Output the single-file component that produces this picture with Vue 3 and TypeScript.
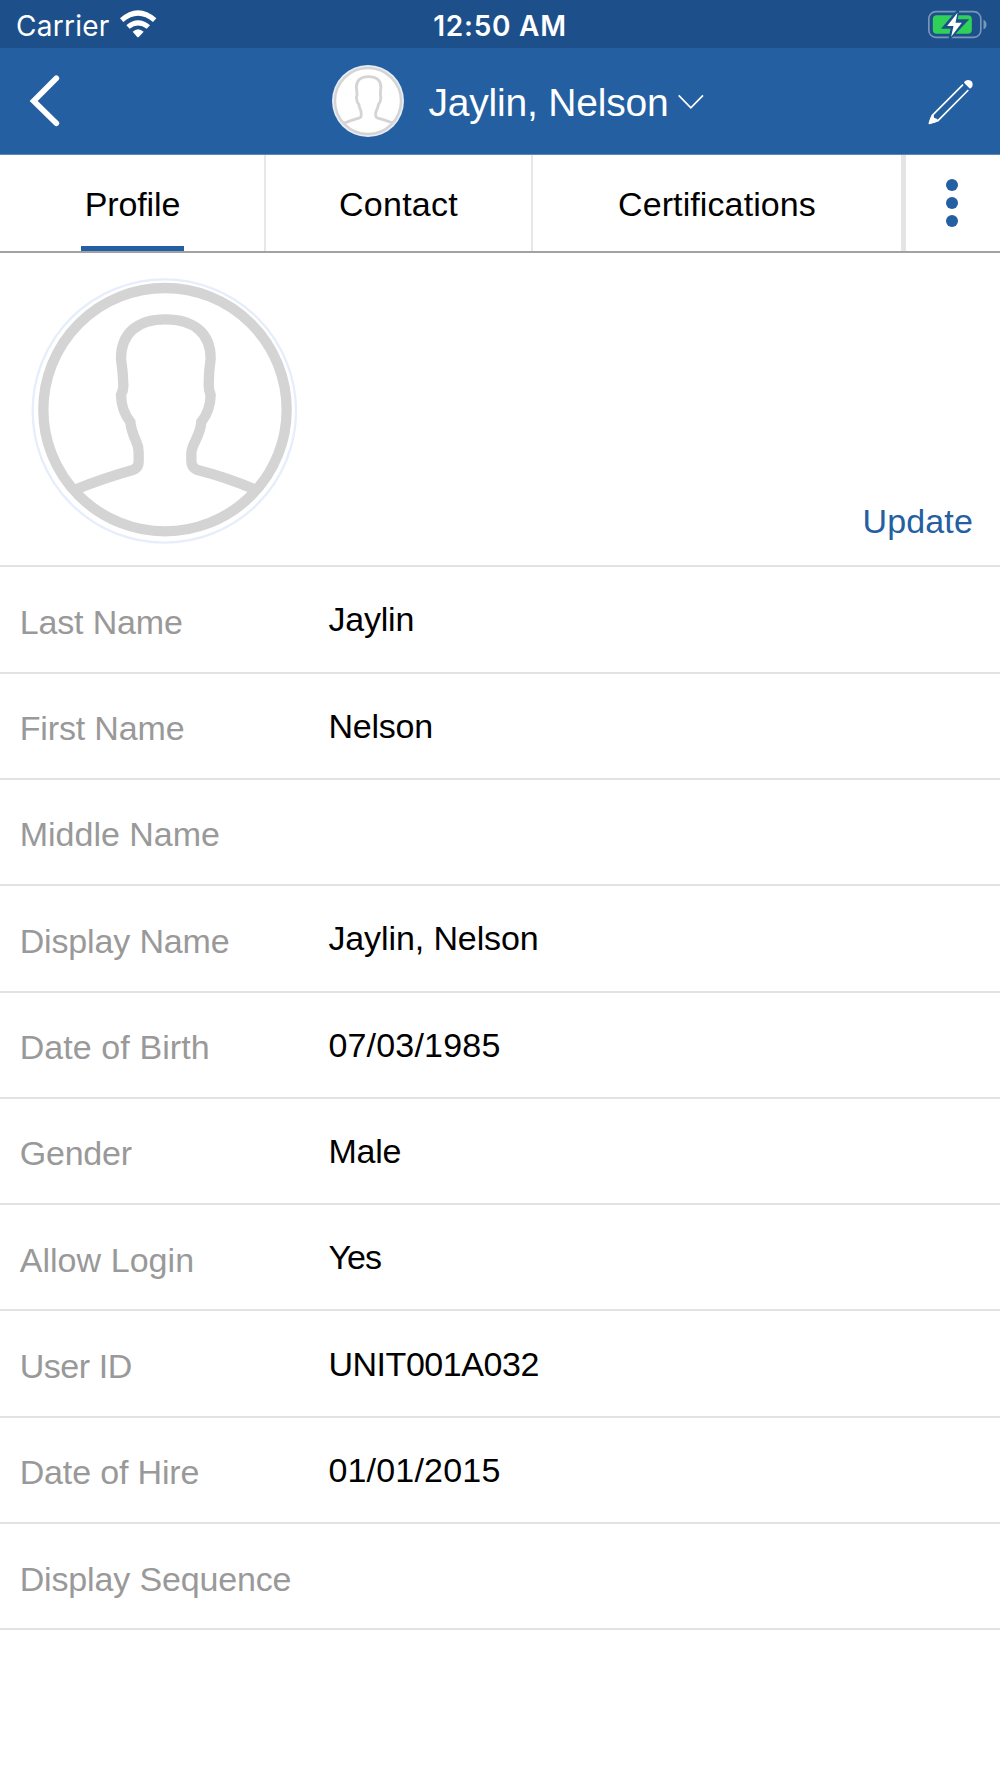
<script setup lang="ts">
interface Field {
  label: string
  value: string
  labelTrack?: number
  valueTrack?: number
}

const fields: Field[] = [
  { label: 'Last Name', value: 'Jaylin', labelTrack: -0.15, valueTrack: -0.2 },
  { label: 'First Name', value: 'Nelson', labelTrack: -0.15, valueTrack: -0.2 },
  { label: 'Middle Name', value: '' },
  { label: 'Display Name', value: 'Jaylin, Nelson', labelTrack: -0.15, valueTrack: -0.1 },
  { label: 'Date of Birth', value: '07/03/1985', labelTrack: 0.08, valueTrack: 0.2 },
  { label: 'Gender', value: 'Male', labelTrack: -0.2, valueTrack: -0.2 },
  { label: 'Allow Login', value: 'Yes', labelTrack: 0.05, valueTrack: -0.9 },
  { label: 'User ID', value: 'UNIT001A032', labelTrack: -0.45, valueTrack: -0.45 },
  { label: 'Date of Hire', value: '01/01/2015', labelTrack: -0.15, valueTrack: 0.2 },
  { label: 'Display Sequence', value: '', labelTrack: -0.15 },
]

const tabs: { name: string; active: boolean }[] = [
  { name: 'Profile', active: true },
  { name: 'Contact', active: false },
  { name: 'Certifications', active: false },
]

const figurePath =
  'M230 687 Q310 655 398 630 Q416 624 416 606 V578 Q416 560 408 543 Q393 510 391 486 ' +
  'Q364 452 363 405 Q371 390 370 374 Q369 335 363 296 C363 220 412 178 496 178 ' +
  'C582 178 632 220 632 296 Q626 335 626 376 Q626 390 632 405 Q631 452 604 486 ' +
  'Q602 510 587 541 Q574 566 574 582 V602 Q574 622 590 629 Q680 652 762 687'
</script>

<template>
  <div class="screen">
    <div class="status">
      <div class="carrier">
        <span class="carrier-name">Carrier</span>
        <svg class="wifi" viewBox="358 26 114 87">
          <path d="M361 54 Q415 6 470 54 L460 65 Q415 28 371 65 Z" fill="#fff" />
          <path d="M380 75 Q415 45 451 75 L441 85 Q415 66 390 85 Z" fill="#fff" />
          <path d="M399 94 Q415 79 432 94 L418 109 Q415 112 412 109 Z" fill="#fff" />
        </svg>
      </div>
      <span class="clock">12:50 AM</span>
      <svg class="battery" viewBox="682 26 182 96">
        <rect x="687" y="34" width="156" height="77" rx="21" fill="none" stroke="#7796ba" stroke-width="5" />
        <path d="M851 58 Q860 62 860 73 Q860 83 851 87 Z" fill="#7796ba" />
        <rect x="699" y="45" width="117" height="55" rx="12" fill="#30d158" />
        <path d="M774 32 L732 81 H757 L751 112 L799 61 H769 Z" fill="#1d508b" stroke="#1d508b" stroke-width="8" />
        <path d="M773 37 L742 77 H761 L754 109 L786 67 H767 Z" fill="#fff" />
      </svg>
    </div>

    <header class="nav">
      <svg class="back" viewBox="84 220 102 168">
        <path d="M169 236 L101 304 L169 371" fill="none" stroke="#fff" stroke-width="17" stroke-linecap="round" />
      </svg>
      <div class="person">
        <svg class="avatar-small" viewBox="0 0 72 72">
          <circle cx="36" cy="36" r="36" fill="#e7ecf8" />
          <circle cx="36" cy="36" r="33" fill="#fff" stroke="#d4d4d4" stroke-width="2.4" />
          <svg x="-6" y="-6" width="85" height="85" viewBox="31 -14 930 930">
            <path :d="figurePath" fill="none" stroke="#d4d4d4" stroke-width="31" />
          </svg>
        </svg>
        <span class="title">Jaylin, Nelson</span>
        <svg class="caret" viewBox="1072 280 80 50">
          <path d="M1077 287 L1113 324 L1149 287" fill="none" stroke="#fff" stroke-width="5" />
        </svg>
      </div>
      <svg class="pencil" viewBox="680 234 144 144">
        <path d="M788 254 L696 346 L687 370 L713 362 L804 270" fill="none" stroke="#fff" stroke-width="5" stroke-linejoin="round" />
        <path d="M695 345 L700 345 L701 353 L711 357 L713 362 L702 368 L686 371 L689 356 Z" fill="#fff" />
        <path d="M791 248 Q794 240 804 240 Q817 241 817 254 Q817 263 809 266 Z" fill="#fff" />
      </svg>
    </header>

    <nav class="tabs">
      <div v-for="tab in tabs" :key="tab.name" class="tab" :class="[tab.name.toLowerCase(), { active: tab.active }]">
        <span>{{ tab.name }}</span>
      </div>
      <div class="more">
        <i></i><i></i><i></i>
      </div>
    </nav>

    <section class="photo">
      <svg class="avatar" viewBox="93 51 801 804">
        <circle cx="493" cy="453" r="395" fill="#fff" stroke="#e7eefb" stroke-width="7" />
        <circle cx="495" cy="449" r="365" fill="none" stroke="#d4d4d4" stroke-width="31" />
        <path :d="figurePath" fill="none" stroke="#d4d4d4" stroke-width="31" />
      </svg>
      <span class="update">Update</span>
    </section>

    <div v-for="field in fields" :key="field.label" class="row">
      <span class="label" :style="{ letterSpacing: (field.labelTrack ?? 0) + 'px' }">{{ field.label }}</span>
      <span class="value" :style="{ letterSpacing: (field.valueTrack ?? 0) + 'px' }">{{ field.value }}</span>
    </div>
  </div>
</template>

<style>
body {
  margin: 0;
  background: #fff;
}
</style>

<style scoped>
.screen {
  width: 1000px;
  height: 1778px;
  overflow: hidden;
  background: #fff;
  font-family: "Liberation Sans", Arial, sans-serif;
  font-size: 34px;
  line-height: 40px;
  color: #000;
  white-space: nowrap;
}
svg {
  display: block;
  flex: none;
}
.status {
  display: grid;
  grid-template-columns: 1fr auto 1fr;
  height: 48px;
  background: #1d508b;
  color: #fff;
  font-family: Inter, sans-serif;
  font-size: 28px;
  line-height: 52px;
}
.carrier {
  display: flex;
  padding-left: 16px;
}
.carrier-name {
  width: 103px;
  letter-spacing: 0.25px;
}
.wifi {
  width: 38px;
  height: 29px;
  margin-top: 9px;
}
.clock {
  font-weight: 600;
  letter-spacing: 0.75px;
}
.battery {
  justify-self: end;
  width: 61px;
  height: 32px;
  margin: 9px 12px 0 0;
}
.nav {
  box-sizing: border-box;
  display: flex;
  height: 107px;
  background: #245fa1;
  border-bottom: 1px solid #5a86b8;
}
.back {
  width: 34px;
  height: 56px;
  margin: 25.4px 0 0 28px;
}
.person {
  display: flex;
  margin-left: 270px;
}
.avatar-small {
  width: 72px;
  height: 72px;
  margin-top: 17.4px;
}
.title {
  width: 248.5px;
  margin: 33px 0 0 24.5px;
  color: #fff;
  font-size: 39px;
  line-height: 44px;
  letter-spacing: -0.2px;
}
.caret {
  width: 27px;
  height: 17px;
  margin-top: 45.3px;
}
.pencil {
  width: 48px;
  height: 48px;
  margin: 30px 25px 0 auto;
}
.tabs {
  box-sizing: border-box;
  display: flex;
  height: 98px;
  border-bottom: 2px solid #a1a1a1;
}
.tab {
  box-sizing: border-box;
  display: flex;
  justify-content: center;
  padding-top: 29px;
  border-right: 2px solid #e5e8e8;
}
.profile {
  width: 266px;
  padding-left: 1px;
  letter-spacing: -0.15px;
}
.contact {
  width: 267px;
  letter-spacing: 0.25px;
}
.certifications {
  width: 373px;
  border-right: 5px solid #e4e4e4;
  letter-spacing: 0.1px;
}
.tab span {
  height: 62px;
  padding: 0 4px;
  border-bottom: 5px solid transparent;
}
.tab.active span {
  border-bottom-color: #245fa1;
}
.more {
  display: flex;
  flex: 1;
  flex-direction: column;
  align-items: center;
  gap: 5.5px;
  padding: 23.8px 2px 0 0;
}
.more i {
  width: 12.4px;
  height: 12.4px;
  border-radius: 50%;
  background: #245fa1;
}
.photo {
  box-sizing: border-box;
  display: flex;
  justify-content: space-between;
  height: 314.3px;
  padding: 24px 27px 0 31px;
  border-bottom: 2px solid #e2e2e2;
}
.avatar {
  width: 267px;
  height: 268px;
}
.update {
  margin-top: 224px;
  color: #245fa1;
  letter-spacing: 0.15px;
}
.row {
  box-sizing: border-box;
  display: flex;
  height: 106.32px;
  border-bottom: 2px solid #e2e2e2;
}
.label {
  width: 308.7px;
  padding: 34.4px 0 0 19.7px;
  color: #999;
}
.value {
  padding-top: 32.2px;
}
</style>
